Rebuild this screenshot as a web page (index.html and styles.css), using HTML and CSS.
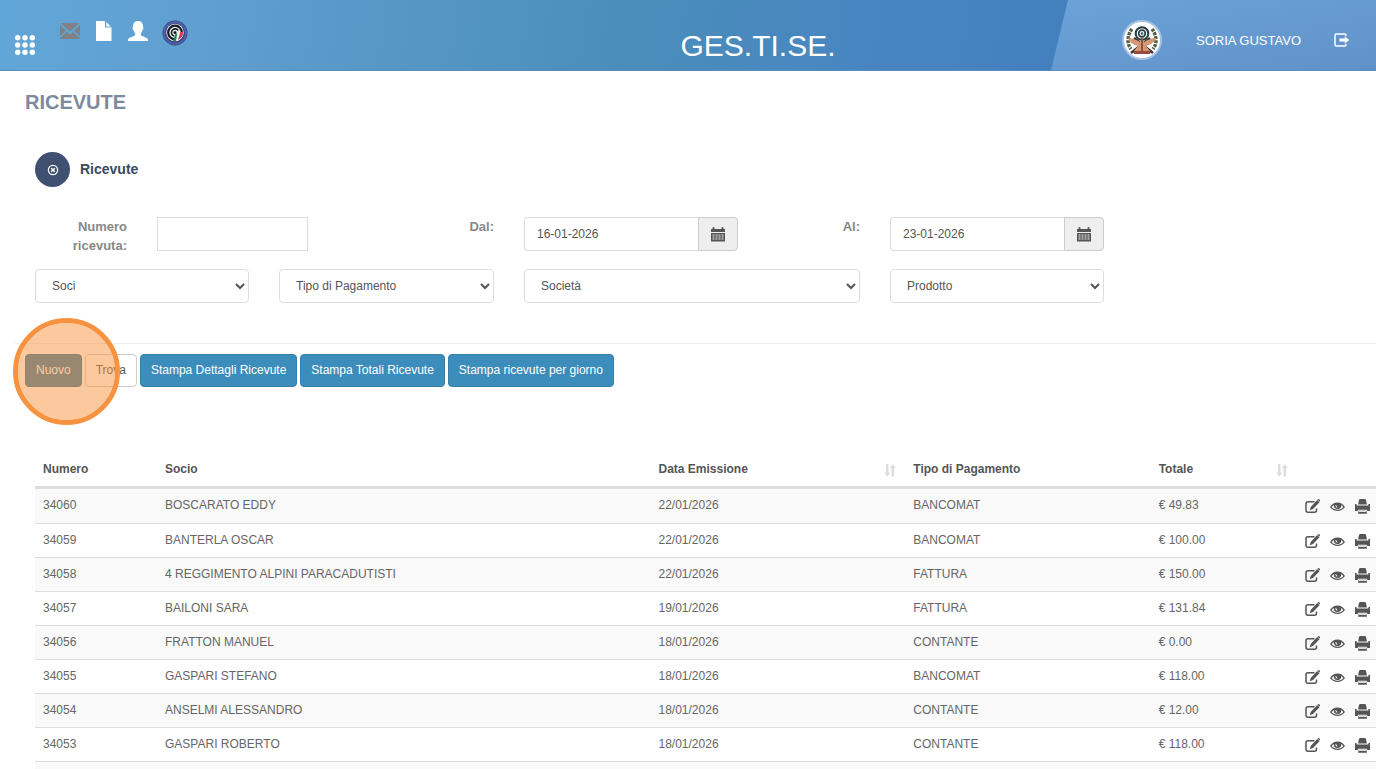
FILE: index.html
```html
<!DOCTYPE html>
<html lang="it">
<head>
<meta charset="utf-8">
<title>GES.TI.SE. - Ricevute</title>
<link rel="stylesheet" href="styles.css">
</head>
<body>
<svg class="sprite" aria-hidden="true">
  <symbol id="i-edit" viewBox="0 0 15 15"><path d="M9.500 2.700H3Q1 2.700 1 4.700v6.600q0 2 2 2h6.500q2 0 2-2V9.500" fill="none" stroke="#555" stroke-width="1.500"/><path d="M12.200 1 14.500 3.200 8 10l-3.200 1.200L5.700 8zM13 .3q.7-.6 1.300 0l.6.600q.5.600 0 1.200l-.4.400L12.500.8z"/></symbol>
  <symbol id="i-eye" viewBox="0 0 15 15"><path fill-rule="evenodd" d="M0 8C2 4.700 4.600 3.500 7.500 3.500S13 4.700 15 8c-2 2.700-4.600 4-7.500 4S2 10.700 0 8zm1.700 0c1.300 1.700 3.200 2.700 5.800 2.700s4.500-1 5.800-2.700c-.6-.9-1.300-1.600-2.100-2.100.3 2.700-1.200 4-3.700 4s-4-1.300-3.700-4c-.8.500-1.500 1.200-2.100 2.100z"/><circle cx="7.500" cy="6.900" r="2.700"/><path class="glint" d="M5.400 6h.9c0 1 .3 1.600 1.200 1.900v.7C6 8.500 5.400 7.600 5.400 6z"/></symbol>
  <symbol id="i-print" viewBox="0 0 15 15"><path d="M5 0h5l1 .8.900 4.700H3.100L4 .8zM0 5h1.600v1.500h11.800V5H15v7h-2.600l-.7-1.200H3.300L2.600 12H0z"/><path d="M3.600 11.800h7.800l.6 3H3z"/><path class="glint" d="M4 12.100h7v.8H4z"/></symbol>
  <symbol id="i-sort" viewBox="0 0 14 14"><path d="M3 1h2.400v8.500h1.800l-3 4-3-4H3zM8.600 13.500H11V5h1.800l-3-4-3 4h1.800z"/></symbol>
  <symbol id="i-cal" viewBox="0 0 14 15"><path fill-rule="evenodd" d="M0 2h1.500V1q0-1 1-1t1 1v1h7V1q0-1 1-1t1 1v1H14v3H0zM0 6h14v8.500H0zM1.500 7.500v1h2v-1zm3 0v1h2v-1zm3 0v1h2v-1zm3 0v1h2v-1zM1.500 9.500v1h2v-1zm3 0v1h2v-1zm3 0v1h2v-1zm3 0v1h2v-1zM1.500 11.500v1h2v-1zm3 0v1h2v-1zm3 0v1h2v-1zm3 0v1h2v-1z"/></symbol>
</svg>

<header class="topbar">
  <nav class="tools">
    <a class="tool menu" href="#" aria-label="Menu"><svg width="20" height="20" viewBox="0 0 20 20"><g fill="#fff"><circle cx="2.700" cy="2.700" r="2.700"/><circle cx="10" cy="2.700" r="2.700"/><circle cx="17.300" cy="2.700" r="2.700"/><circle cx="2.700" cy="10" r="2.700"/><circle cx="10" cy="10" r="2.700"/><circle cx="17.300" cy="10" r="2.700"/><circle cx="2.700" cy="17.300" r="2.700"/><circle cx="10" cy="17.300" r="2.700"/><circle cx="17.300" cy="17.300" r="2.700"/></g></svg></a>
    <a class="tool mail" href="#" aria-label="Messaggi"><svg width="20" height="20" viewBox="0 0 20 20"><path fill="#808184" d="M.5 2h19L10 10.500zM0 4l5.800 5.600L0 15zM20 4l-5.800 5.600L20 15zM7 10.800l3 2.900 3-2.900 7 6.400v.8H0v-.8z"/></svg></a>
    <a class="tool file" href="#" aria-label="Documenti"><svg width="16" height="20" viewBox="0 0 16 20"><path fill="#fff" d="M0 0h9v6.500h6.500V20H0zM10.300 1l4.400 4.400h-4.400z"/></svg></a>
    <a class="tool" href="#" aria-label="Profilo"><svg width="20" height="20" viewBox="0 0 20 20"><path fill="#fff" d="M10 0c3.200 0 5 2.200 5 5.300 0 .6.700 1 .4 2.200-.2 1-.7 1-.9 1.700-.4 1.500-1.100 2.300-1.600 3v2c2 1.300 5.300 2 6.500 3.300.6.700.6 1.500.6 2.500H0c0-1 0-1.800.6-2.500 1.200-1.300 4.500-2 6.500-3.300v-2c-.5-.7-1.200-1.500-1.600-3-.2-.7-.7-.7-.9-1.700C4.300 6.300 5 5.900 5 5.300 5 2.200 6.800 0 10 0z"/></svg></a>
    <a class="tool club" href="#" aria-label="Federazione"><svg width="26" height="26" viewBox="0 0 26 26"><circle cx="13" cy="13" r="12.500" fill="#38477f"/><circle cx="13" cy="13" r="10.800" fill="none" stroke="#4b59a8" stroke-width="2"/><circle cx="13" cy="13" r="11" fill="none" stroke="#8791cc" stroke-width=".6" stroke-dasharray="1 2"/><circle cx="13" cy="12.500" r="8.700" fill="#eee"/><circle cx="13" cy="12.500" r="6.800" fill="none" stroke="#151923" stroke-width="2.200"/><path d="M16.200 10.500a3.700 3.700 0 1 0-4.200 5.600" fill="none" stroke="#151923" stroke-width="1.600"/><circle cx="13" cy="12.500" r="1.500" fill="#151923"/><path d="M13 14.500l2.500-1.500-1.500 8h-3z" fill="#188748"/><path d="M15.500 13.300l2.500-.8-2 8h-2z" fill="#fff"/><path d="M18 12.300l3-.8c0 3-1.500 6-4.500 8z" fill="#df404e"/></svg></a>
  </nav>
  <div class="brand">GES.TI.SE.</div>
  <div class="account">
    <svg class="avatar" width="40" height="40" viewBox="0 0 40 40"><circle cx="20" cy="20" r="19" fill="#fff" stroke="#a3c2e6" stroke-width="2"/><path d="M10 9c-4 5-6 14-1 20M30 9c4 5 6 14 1 20" fill="none" stroke="#526044" stroke-width="3.500" stroke-dasharray="3 1"/><path d="M9 33l19-15M31 33L12 18" stroke="#37352f" stroke-width="2.500"/><circle cx="20" cy="13.500" r="6.300" fill="#f8f8ee" stroke="#263c45" stroke-width="2"/><circle cx="20" cy="13.500" r="3.300" fill="none" stroke="#263c45" stroke-width="1.700"/><circle cx="20" cy="13.500" r="1.200" fill="#29566b"/><path d="M6 18c4 0 9 2 12 4l2-3 2 3c3-2 8-4 12-4-2 5-6 7-10 8l4 5H12l4-5c-4-1-8-3-10-8z" fill="#d59675"/><path d="M19 18h2v14h-2z" fill="#8b5640"/><path d="M12 31h16v3H12z" fill="#9c493c"/></svg>
    <span class="user">SORIA GUSTAVO</span>
    <a class="logout" href="#" aria-label="Esci"><svg width="16" height="14" viewBox="0 0 16 14"><path d="M12 3V2.500Q12 1 10.500 1h-8Q1 1 1 2.500v9Q1 13 2.500 13h8q1.500 0 1.500-1.500V11" fill="none" stroke="#fff" stroke-width="1.500"/><path d="M5.500 5.500h5.300V3.300L15.300 7l-4.500 3.700V8.500H5.500z" fill="#fff"/></svg></a>
  </div>
</header>

<main>
  <h1>RICEVUTE</h1>
  <form>
    <h2><span class="badge"><svg width="12" height="12" viewBox="0 0 12 12"><circle cx="6" cy="6" r="4.600" fill="none" stroke="#fff" stroke-width="1.300"/><path d="M4.200 4.200l3.600 3.600M7.800 4.200L4.200 7.800" stroke="#fff" stroke-width="1.500"/></svg></span>Ricevute</h2>
    <div class="row fields">
      <label for="numero">Numero ricevuta:</label>
      <div class="cell"><input class="control square" id="numero" type="text"></div>
      <label for="dal">Dal:</label>
      <div class="cell group"><input class="control" id="dal" type="text" value="16-01-2026"><button class="addon" type="button" aria-label="Apri calendario dal"><svg width="14" height="15"><use href="#i-cal"/></svg></button></div>
      <label for="al">Al:</label>
      <div class="cell group"><input class="control" id="al" type="text" value="23-01-2026"><button class="addon" type="button" aria-label="Apri calendario al"><svg width="14" height="15"><use href="#i-cal"/></svg></button></div>
    </div>
    <div class="row filters">
      <div class="cell"><select class="control" aria-label="Soci"><option>Soci</option></select></div>
      <div class="cell"><select class="control" aria-label="Tipo di Pagamento"><option>Tipo di Pagamento</option></select></div>
      <div class="cell"><select class="control" aria-label="Società"><option>Società</option></select></div>
      <div class="cell"><select class="control" aria-label="Prodotto"><option>Prodotto</option></select></div>
    </div>
    <div class="actions">
      <button class="btn active" type="button">Nuovo</button>
      <button class="btn plain" type="button">Trova</button>
      <button class="btn" type="button">Stampa Dettagli Ricevute</button>
      <button class="btn" type="button">Stampa Totali Ricevute</button>
      <button class="btn" type="button">Stampa ricevute per giorno</button>
      <span class="spot"></span>
    </div>
  </form>

  <table>
    <colgroup><col class="c-num"><col class="c-name"><col class="c-date"><col class="c-pay"><col class="c-total"><col class="c-act"></colgroup>
    <thead>
      <tr><th>Numero</th><th>Socio</th><th><span class="sortable">Data Emissione<svg width="14" height="14"><use href="#i-sort"/></svg></span></th><th>Tipo di Pagamento</th><th><span class="sortable">Totale<svg width="14" height="14"><use href="#i-sort"/></svg></span></th><th></th></tr>
    </thead>
    <tbody>
      <tr><td>34060</td><td>BOSCARATO EDDY</td><td>22/01/2026</td><td>BANCOMAT</td><td>€ 49.83</td><td><div class="ops"><a href="#" aria-label="Modifica"><svg><use href="#i-edit"/></svg></a><a href="#" aria-label="Visualizza"><svg><use href="#i-eye"/></svg></a><a href="#" aria-label="Stampa"><svg><use href="#i-print"/></svg></a></div></td></tr>
      <tr><td>34059</td><td>BANTERLA OSCAR</td><td>22/01/2026</td><td>BANCOMAT</td><td>€ 100.00</td><td><div class="ops"><a href="#" aria-label="Modifica"><svg><use href="#i-edit"/></svg></a><a href="#" aria-label="Visualizza"><svg><use href="#i-eye"/></svg></a><a href="#" aria-label="Stampa"><svg><use href="#i-print"/></svg></a></div></td></tr>
      <tr><td>34058</td><td>4 REGGIMENTO ALPINI PARACADUTISTI</td><td>22/01/2026</td><td>FATTURA</td><td>€ 150.00</td><td><div class="ops"><a href="#" aria-label="Modifica"><svg><use href="#i-edit"/></svg></a><a href="#" aria-label="Visualizza"><svg><use href="#i-eye"/></svg></a><a href="#" aria-label="Stampa"><svg><use href="#i-print"/></svg></a></div></td></tr>
      <tr><td>34057</td><td>BAILONI SARA</td><td>19/01/2026</td><td>FATTURA</td><td>€ 131.84</td><td><div class="ops"><a href="#" aria-label="Modifica"><svg><use href="#i-edit"/></svg></a><a href="#" aria-label="Visualizza"><svg><use href="#i-eye"/></svg></a><a href="#" aria-label="Stampa"><svg><use href="#i-print"/></svg></a></div></td></tr>
      <tr><td>34056</td><td>FRATTON MANUEL</td><td>18/01/2026</td><td>CONTANTE</td><td>€ 0.00</td><td><div class="ops"><a href="#" aria-label="Modifica"><svg><use href="#i-edit"/></svg></a><a href="#" aria-label="Visualizza"><svg><use href="#i-eye"/></svg></a><a href="#" aria-label="Stampa"><svg><use href="#i-print"/></svg></a></div></td></tr>
      <tr><td>34055</td><td>GASPARI STEFANO</td><td>18/01/2026</td><td>BANCOMAT</td><td>€ 118.00</td><td><div class="ops"><a href="#" aria-label="Modifica"><svg><use href="#i-edit"/></svg></a><a href="#" aria-label="Visualizza"><svg><use href="#i-eye"/></svg></a><a href="#" aria-label="Stampa"><svg><use href="#i-print"/></svg></a></div></td></tr>
      <tr><td>34054</td><td>ANSELMI ALESSANDRO</td><td>18/01/2026</td><td>CONTANTE</td><td>€ 12.00</td><td><div class="ops"><a href="#" aria-label="Modifica"><svg><use href="#i-edit"/></svg></a><a href="#" aria-label="Visualizza"><svg><use href="#i-eye"/></svg></a><a href="#" aria-label="Stampa"><svg><use href="#i-print"/></svg></a></div></td></tr>
      <tr><td>34053</td><td>GASPARI ROBERTO</td><td>18/01/2026</td><td>CONTANTE</td><td>€ 118.00</td><td><div class="ops"><a href="#" aria-label="Modifica"><svg><use href="#i-edit"/></svg></a><a href="#" aria-label="Visualizza"><svg><use href="#i-eye"/></svg></a><a href="#" aria-label="Stampa"><svg><use href="#i-print"/></svg></a></div></td></tr>
      <tr><td></td><td></td><td></td><td></td><td></td><td></td></tr>
    </tbody>
  </table>
</main>
</body>
</html>
```
FILE: styles.css
```css
* { box-sizing: border-box; }
body {
  margin: 0;
  background: #fff;
  color: #666;
  font: 12px/17px "Liberation Sans", Arial, sans-serif;
}
svg { display: block; }
.sprite { position: absolute; width: 0; height: 0; }

.topbar {
  display: grid;
  grid-template-columns: 1fr auto 1fr;
  align-items: start;
  position: relative;
  height: 71px;
  padding-left: 15px;
  color: #fff;
  background: linear-gradient(100deg, #61a6d8 0%, #609fd0 15%, #4a8dba 46%, #4886c1 62%, #437fbd 78%);
  border-bottom: 1px solid #5b8db9;
}
.topbar::after {
  content: "";
  position: absolute;
  inset: 0 0 0 auto;
  width: 325px;
  background: linear-gradient(170deg, #6ca2d8, #5f92c9);
  clip-path: polygon(17px 0, 100% 0, 100% 100%, 0 100%);
}
.tools { display: flex; align-items: flex-start; padding-top: 21px; }
.tool { margin-right: 16px; }
.menu { margin: 14px 25px 0 0; }
.club { margin-left: -2px; margin-top: -1px; }
.brand { padding: 28px 0 0 125px; font-size: 30px; line-height: 36px; }
.account {
  position: relative;
  z-index: 1;
  display: flex;
  align-items: center;
  justify-content: flex-end;
  padding: 20px 26px 0 0;
  font-size: 13px;
}
.user { margin: 0 33px 0 34px; white-space: nowrap; }

h1 { margin: 0; padding: 19px 25px 0; color: #7d8a9d; font-size: 20px; line-height: 24px; }
form { padding-top: 38px; }
h2 {
  display: flex;
  align-items: center;
  gap: 10px;
  margin: 0 0 30px 35px;
  color: #3c4961;
  font-size: 14px;
}
.badge {
  display: grid;
  place-items: center;
  width: 35px;
  height: 35px;
  border-radius: 50%;
  background: #405070;
}
.row { display: grid; padding-left: 20px; }
.fields { grid-template-columns: 122fr 181fr 186fr 244fr 122fr 244fr 257fr; }
.filters { grid-template-columns: 244fr 245fr 366fr 244fr 257fr; margin-top: 14px; }
.fields label {
  padding: 0 15px;
  color: #888;
  font-size: 13px;
  font-weight: bold;
  line-height: 19px;
  text-align: right;
}
.cell { padding: 0 15px; }
.group { display: flex; align-items: flex-start; }
.control {
  width: 100%;
  min-width: 0;
  height: 34px;
  padding: 6px 12px;
  border: 1px solid #ddd;
  border-radius: 4px;
  background-color: #fff;
  color: #555;
  font: inherit;
}
.square { border-radius: 0; }
.group .control { flex: 1; border-right: 0; border-radius: 4px 0 0 4px; }
.addon {
  display: grid;
  place-items: center;
  flex: none;
  width: 40px;
  height: 34px;
  padding: 0;
  border: 1px solid #ccc;
  border-radius: 0 4px 4px 0;
  background: #eee;
  fill: #555;
}
.actions {
  display: flex;
  gap: 3px;
  position: relative;
  margin: 40px 0 0 15px;
  padding: 10px 10px 0;
  border-top: 1px solid #eee;
}
.btn {
  height: 33px;
  padding: 0 10px;
  border: 1px solid #367fa9;
  border-radius: 4px;
  background: #3c8dbc;
  color: #fff;
  font: inherit;
}
.active { background: #367fa9; border-color: #2f7299; }
.plain { background: #fff; border-color: #ccc; color: #555; }
.spot {
  position: absolute;
  left: -2px;
  top: -26px;
  width: 107px;
  height: 107px;
  border-radius: 50%;
  border: 5px solid #f79240;
  background: rgb(249 146 60 / .5);
  background-clip: padding-box;
  pointer-events: none;
}

table {
  width: calc(100% - 35px);
  margin: 66px 0 0 35px;
  border-collapse: separate;
  border-spacing: 0;
  table-layout: fixed;
}
.c-num { width: 9.100%; }
.c-name { width: 36.800%; }
.c-date { width: 19%; }
.c-pay { width: 18.300%; }
.c-total { width: 10.900%; }
th, td { padding: 8px; text-align: left; vertical-align: top; white-space: nowrap; }
th { border-bottom: 3px solid #ddd; color: #555; }
td { border-bottom: 1px solid #ddd; }
tbody tr:nth-child(odd) { background: #f9f9f9; }
tbody tr:first-child { height: 35px; }
.sortable { display: flex; align-items: center; justify-content: space-between; }
.sortable svg { fill: #ddd; }
.ops { display: flex; gap: 10px; height: 17px; align-items: flex-end; }
.ops a { color: #555; }
.ops svg { width: 15px; height: 15px; fill: #555; }
.glint { fill: #fff; }
```
